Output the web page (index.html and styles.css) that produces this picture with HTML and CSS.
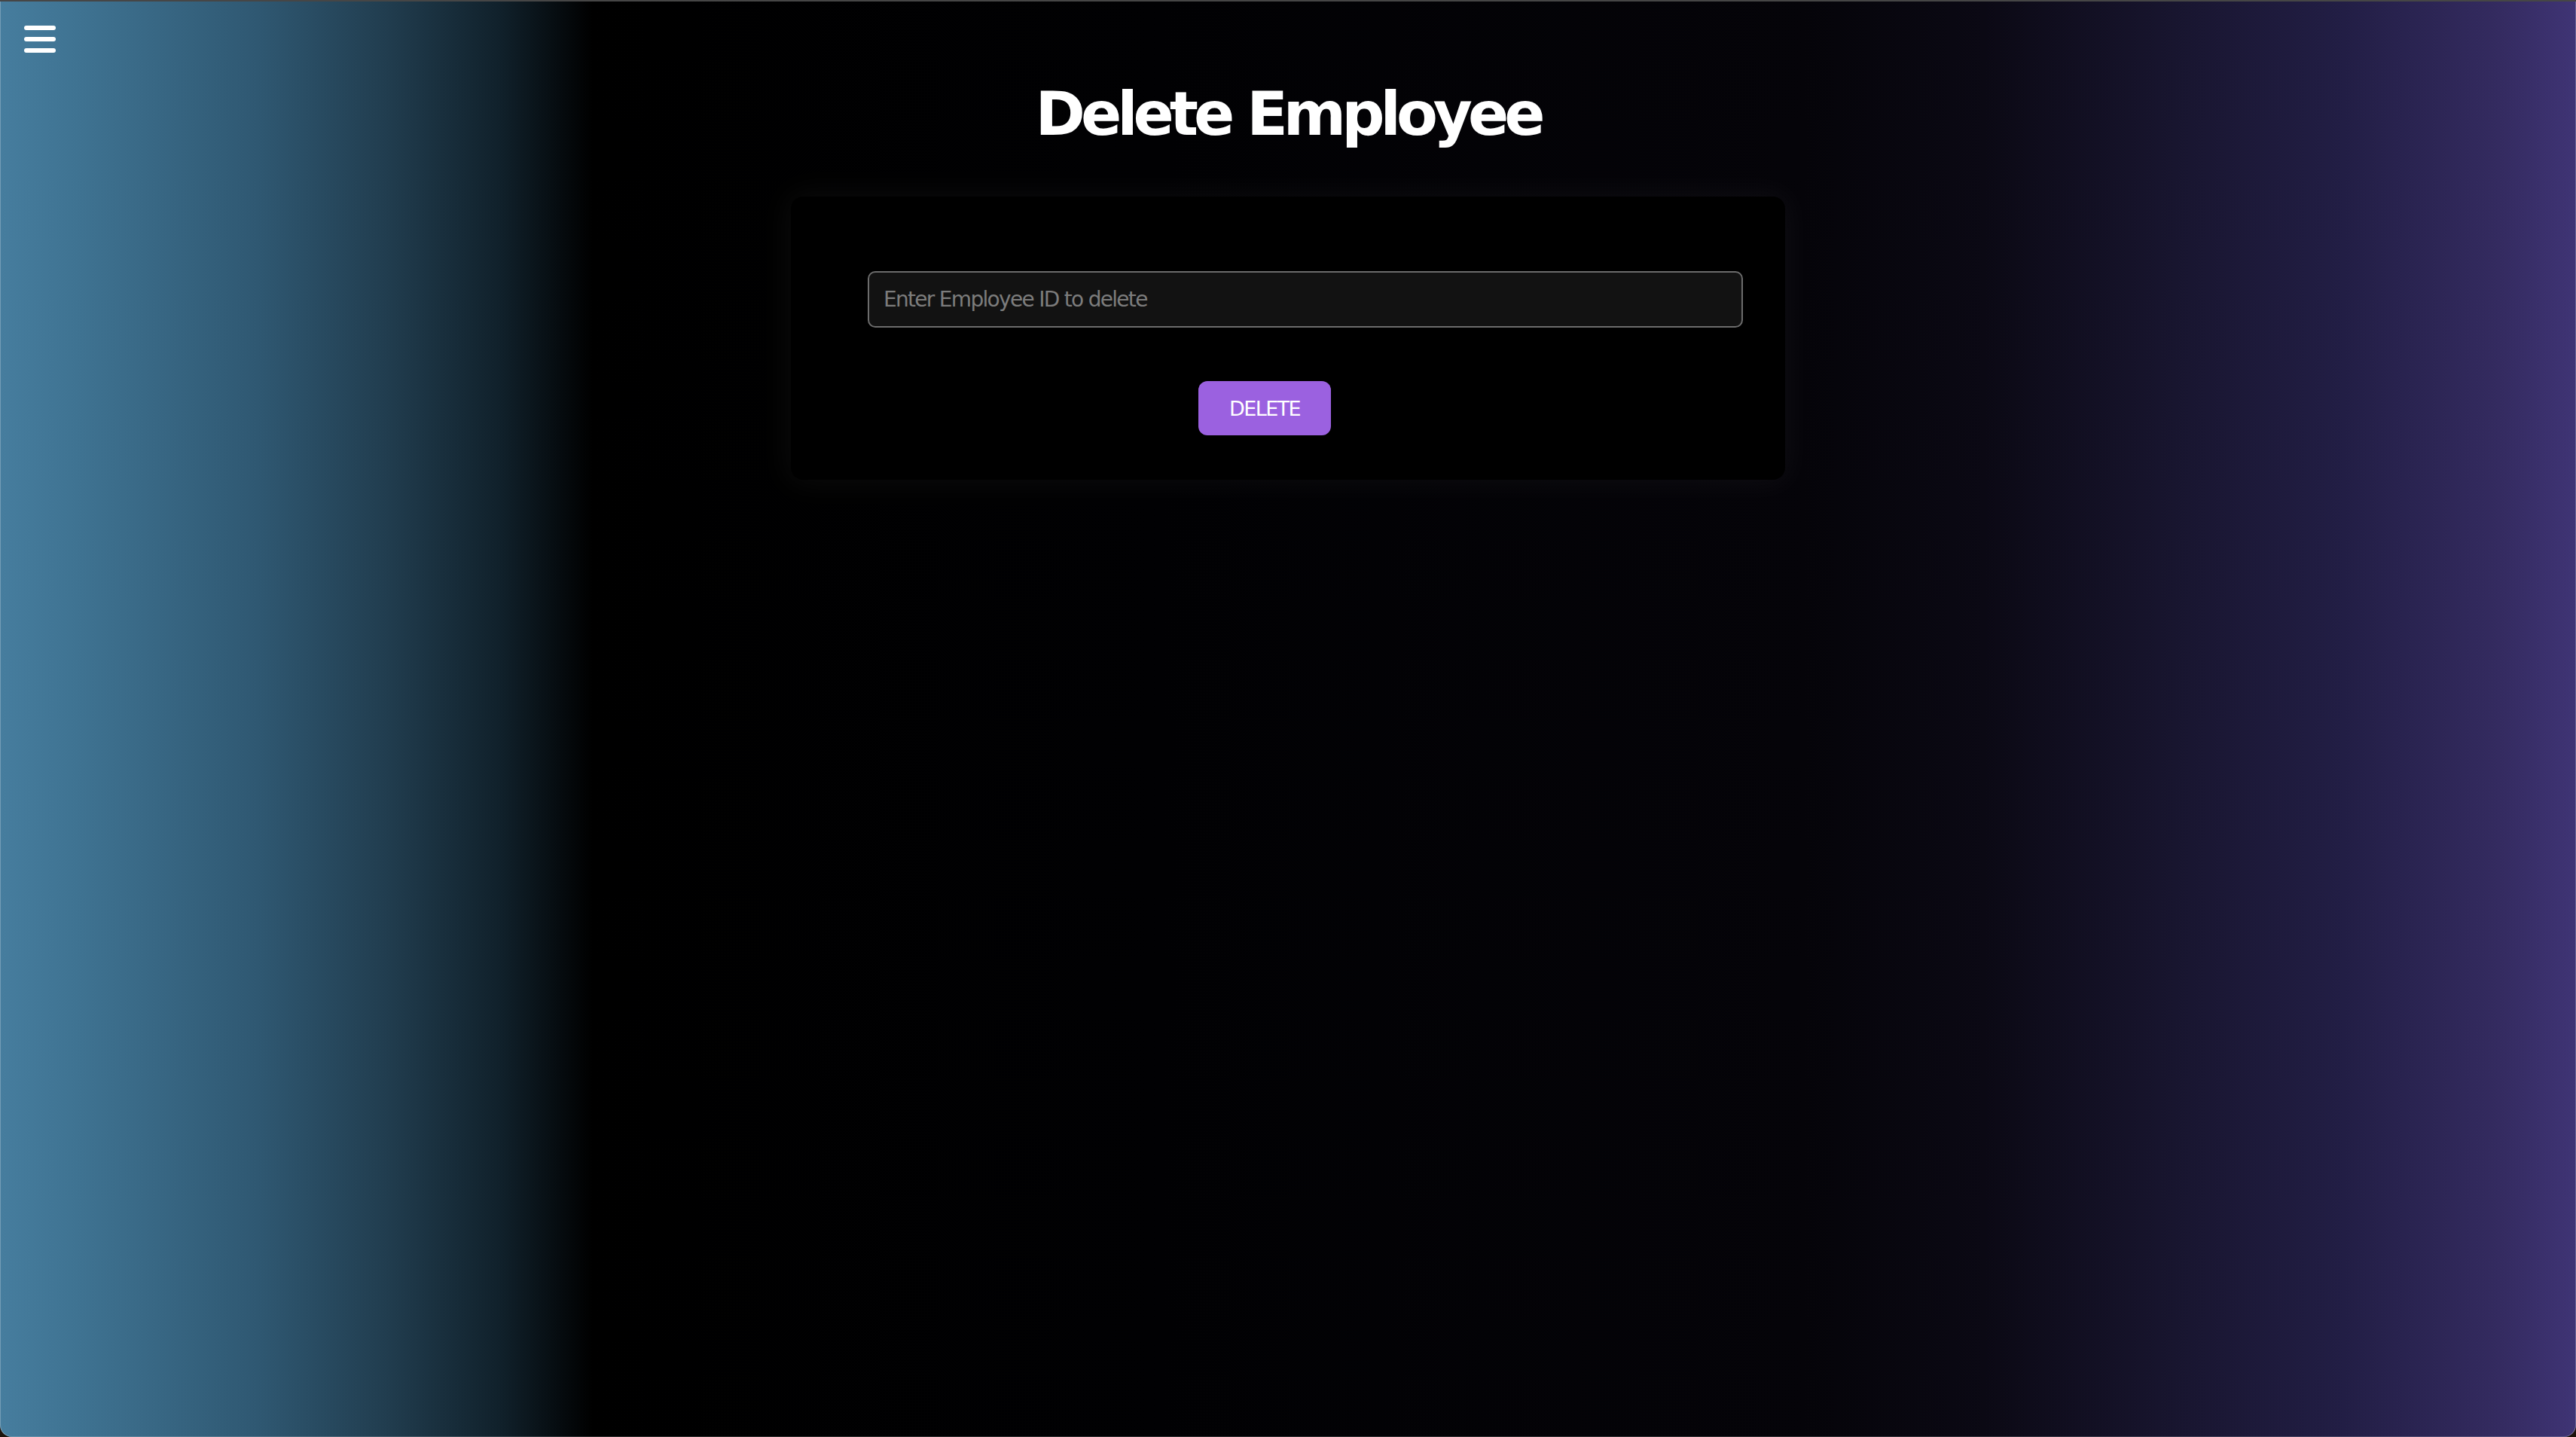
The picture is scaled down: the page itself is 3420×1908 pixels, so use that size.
FILE: index.html
```html
<!DOCTYPE html>
<html lang="en">
<head>
<meta charset="utf-8">
<title>Delete Employee</title>
<link rel="stylesheet" href="styles.css">
</head>
<body>
<div class="window">
  <button class="menu-toggle" type="button" aria-label="Menu">
    <span class="bar"></span>
    <span class="bar"></span>
    <span class="bar"></span>
  </button>
  <main class="main">
    <h1 class="title">Delete Employee</h1>
    <form class="card">
      <input class="field" type="text" placeholder="Enter Employee ID to delete">
      <button class="btn-delete" type="button">DELETE</button>
    </form>
  </main>
</div>
</body>
</html>
```

FILE: styles.css
```css
html, body {
  margin: 0;
  padding: 0;
  height: 100%;
  background: #1d130c;
}

.window {
  position: relative;
  box-sizing: border-box;
  height: 1908px;
  border-top: 2px solid #464646;
  border-radius: 0 0 16px 16px;
  overflow: hidden;
  background: linear-gradient(to right,
    #467d9e 0%,
    #3f7392 3%,
    #2f5872 10%,
    #213d4f 15%,
    #10202a 19.5%,
    #000000 23%,
    #010103 45%,
    #050409 70%,
    #0b0914 77%,
    #191631 85%,
    #221e45 91%,
    #342b60 97%,
    #3f3475 100%);
  box-shadow: inset 1px 0 0 rgba(255,255,255,0.25), inset -1px 0 0 rgba(255,255,255,0.25), inset 0 -1px 0 rgba(255,255,255,0.2);
  font-family: "DejaVu Sans", Verdana, sans-serif;
}

.menu-toggle {
  position: absolute;
  top: 32px;
  left: 32px;
  display: flex;
  flex-direction: column;
  gap: 9px;
  padding: 0;
  margin: 0;
  border: 0;
  background: transparent;
  cursor: pointer;
}

.bar {
  display: block;
  width: 42px;
  height: 6px;
  border-radius: 3px;
  background: #ffffff;
}

.main {
  display: flex;
  flex-direction: column;
  align-items: center;
  padding-top: 103px;
}

.title {
  margin: 0;
  font-family: "DejaVu Sans", Verdana, sans-serif;
  font-weight: bold;
  font-size: 80px;
  line-height: normal;
  letter-spacing: -6px;
  color: #ffffff;
}

.card {
  box-sizing: border-box;
  width: 1320px;
  margin-top: 63px;
  padding: 99px 164px 59px 102px;
  background: #000000;
  border-radius: 16px;
  box-shadow: 0 0 40px 6px rgba(255,255,255,0.045);
  display: flex;
  flex-direction: column;
  align-items: center;
}

.field {
  box-sizing: border-box;
  align-self: flex-start;
  width: 1162px;
  height: 75px;
  padding: 0 19px;
  background: #121212;
  border: 2px solid #6c6c6c;
  border-radius: 10px;
  color: #dddddd;
  font-family: "DejaVu Sans", Verdana, sans-serif;
  font-size: 28px;
  letter-spacing: -1.7px;
  outline: none;
}

.field::placeholder {
  color: #7c7c7c;
}

.btn-delete {
  box-sizing: border-box;
  width: 176px;
  height: 72px;
  margin-top: 71px;
  padding: 0;
  border: 0;
  border-radius: 12px;
  background: #9b61e0;
  color: #ffffff;
  font-family: "DejaVu Sans", Verdana, sans-serif;
  font-size: 27px;
  letter-spacing: -1.6px;
  cursor: pointer;
}
```
